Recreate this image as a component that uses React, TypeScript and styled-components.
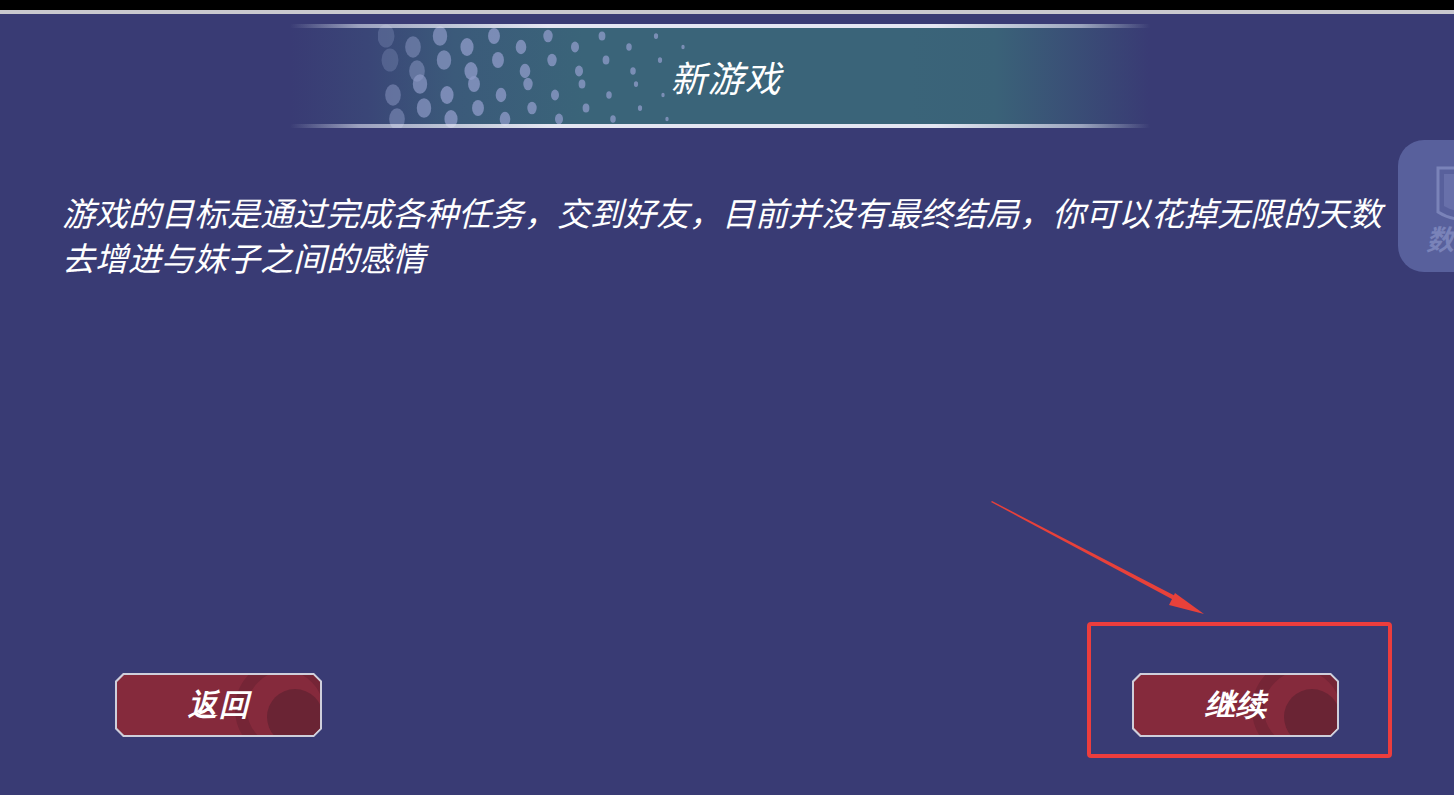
import styled, { createGlobalStyle } from "styled-components";

const GlobalStyles = createGlobalStyle`
  html, body {
    margin: 0;
    padding: 0;
    background-color: #393b74;
    font-family: "Noto Sans CJK SC", "Noto Sans", sans-serif;
    overflow: hidden;
  }
`;

const Screen = styled.div`
  position: relative;
  width: 100vw;
  height: 100vh;
  display: flex;
  flex-direction: column;
  background-color: #393b74;
  overflow: hidden;
`;

const StatusBar = styled.div`
  height: 10px;
  background-color: #000;
  border-bottom: 4px solid #c9c9cf;
  flex-shrink: 0;
`;

const Banner = styled.div`
  position: relative;
  align-self: center;
  width: 860px;
  height: 104px;
  margin-top: 10px;
  margin-left: -14px;
  display: flex;
  align-items: center;
  justify-content: center;
  overflow: hidden;
  background: linear-gradient(
    90deg,
    rgba(58, 100, 121, 0) 0%,
    rgba(59, 80, 122, 0.5) 9%,
    #3b5a7a 19%,
    #3a6479 34%,
    #3a6479 72%,
    #3a6278 82%,
    rgba(58, 98, 121, 0) 100%
  );

  &::before,
  &::after {
    content: "";
    position: absolute;
    left: 0;
    right: 0;
    height: 4px;
    z-index: 1;
    background: linear-gradient(
      90deg,
      rgba(220, 222, 238, 0) 0%,
      rgba(220, 222, 238, 0.6) 8%,
      #e4e6f2 30%,
      #e4e6f2 75%,
      rgba(220, 222, 238, 0.6) 92%,
      rgba(220, 222, 238, 0) 100%
    );
  }
  &::before {
    top: 0;
  }
  &::after {
    bottom: 0;
  }
`;

const Dots = styled.svg`
  position: absolute;
  left: 88px;
  top: 0;
  width: 340px;
  height: 104px;
`;

const Title = styled.h1`
  position: relative;
  margin: 0 0 0 12px;
  color: #fff;
  font-size: 36px;
  font-weight: 400;
  font-style: italic;
  letter-spacing: 1px;
`;

const Intro = styled.p`
  margin: 62px 0 0;
  padding: 0 62px;
  color: #fff;
  font-size: 33px;
  line-height: 45px;
  font-style: italic;
  font-weight: 400;
`;

const Spacer = styled.div`
  flex: 1;
`;

const ButtonRow = styled.div`
  display: flex;
  justify-content: space-between;
  padding: 0 115px 58px;
`;

const ButtonFrame = styled.button`
  width: 207px;
  height: 64px;
  padding: 2px;
  border: 0;
  background: #cfcfdb;
  clip-path: polygon(8px 0, calc(100% - 8px) 0, 100% 8px, 100% calc(100% - 8px), calc(100% - 8px) 100%, 8px 100%, 0 calc(100% - 8px), 0 8px);
  cursor: pointer;
`;

const ButtonFace = styled.span`
  position: relative;
  display: flex;
  align-items: center;
  justify-content: center;
  width: 100%;
  height: 100%;
  background: #852a3c;
  overflow: hidden;
  clip-path: polygon(7px 0, calc(100% - 7px) 0, 100% 7px, 100% calc(100% - 7px), calc(100% - 7px) 100%, 7px 100%, 0 calc(100% - 7px), 0 7px);

  &::before {
    content: "";
    position: absolute;
    left: 118px;
    top: -16px;
    width: 100px;
    height: 100px;
    border-radius: 50%;
    border: 12px solid #752536;
    box-sizing: border-box;
  }
  &::after {
    content: "";
    position: absolute;
    left: 150px;
    top: 14px;
    width: 56px;
    height: 56px;
    border-radius: 50%;
    background: #6a2434;
  }
`;

const ButtonLabel = styled.span`
  position: relative;
  z-index: 1;
  color: #fff;
  font-size: 30px;
  font-weight: 700;
  font-style: italic;
  letter-spacing: 1px;
`;

const SideTab = styled.div`
  position: absolute;
  left: 1398px;
  top: 140px;
  width: 90px;
  height: 132px;
  border-radius: 26px;
  background: #58609c;
  overflow: hidden;
`;

const Highlight = styled.div`
  position: absolute;
  left: 1087px;
  top: 622px;
  width: 305px;
  height: 136px;
  box-sizing: border-box;
  border: 4px solid #ec3d3d;
  border-radius: 4px;
  pointer-events: none;
`;

const Pointer = styled.svg`
  position: absolute;
  left: 985px;
  top: 495px;
  width: 230px;
  height: 130px;
  pointer-events: none;
`;

// halftone ellipses on the left of the title banner: faint at the far left,
// largest just after, then shrinking to specks toward the title
const dots: { x: number; y: number; rx: number; ry: number; o: number }[] = [];
for (let col = 0; col < 12; col++) {
  for (let row = 0; row < 5; row++) {
    const x = 8 + col * 27 - row * 10 + (row % 2) * 14;
    const y = 12 + row * 24 + (col % 2) * 11;
    if (y > 100 || x < -4) continue;
    const scale = Math.max(0.2, 1 - col * 0.075);
    const fade = col < 3 ? 0.3 + col * 0.2 : 0.78;
    dots.push({ x, y, rx: 8.5 * scale, ry: 11.5 * scale, o: fade });
  }
}

function GameButton({ label }: { label: string }) {
  return (
    <ButtonFrame>
      <ButtonFace>
        <ButtonLabel>{label}</ButtonLabel>
      </ButtonFace>
    </ButtonFrame>
  );
}

function App() {
  return (
    <Screen>
      <GlobalStyles />
      <StatusBar />
      <Banner>
        <Dots viewBox="0 0 340 104">
          {dots.map((d, i) => (
            <ellipse key={i} cx={d.x} cy={d.y} rx={d.rx} ry={d.ry} fill="#8d9ac6" opacity={d.o} />
          ))}
        </Dots>
        <Title>新游戏</Title>
      </Banner>
      <Intro>
        游戏的目标是通过完成各种任务，交到好友，目前并没有最终结局，你可以花掉无限的天数去增进与妹子之间的感情
      </Intro>
      <Spacer />
      <ButtonRow>
        <GameButton label="返回" />
        <GameButton label="继续" />
      </ButtonRow>

      <SideTab>
        <svg width="90" height="132" viewBox="0 0 90 132">
          <path d="M40 28 h44 v44 q-22 14 -44 0 z" fill="none" stroke="#7a83b9" strokeWidth="3" />
          <path d="M46 34 h34 v32 q-17 10 -34 0 z" fill="#6870aa" />
          <text x="28" y="110" fill="#7a83b9" fontSize="28" fontStyle="italic" fontWeight="700" fontFamily="Noto Sans CJK SC, sans-serif">
            数
          </text>
        </svg>
      </SideTab>

      <Pointer viewBox="0 0 230 130">
        <polygon points="7,6 200,106 198,110 6,7" fill="#e8413a" />
        <polygon points="219,119 190,98 184,110" fill="#e8413a" />
      </Pointer>
      <Highlight />
    </Screen>
  );
}

export default App;
